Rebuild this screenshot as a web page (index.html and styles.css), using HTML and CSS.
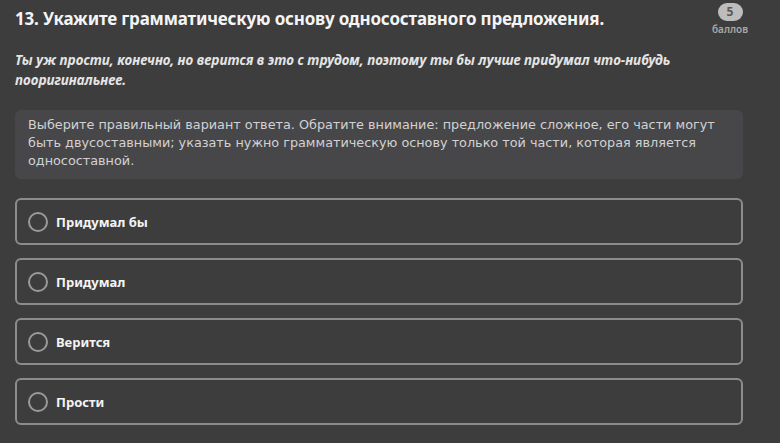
FILE: index.html
```html
<!DOCTYPE html>
<html lang="ru">
<head>
<meta charset="utf-8">
<link rel="stylesheet" href="styles.css">
</head>
<body>
<div class="page">
  <div class="head">
    <h1 class="title">13. Укажите грамматическую основу односоставного предложения.</h1>
    <div class="score">
      <span class="score-num">5</span>
      <span class="score-label">баллов</span>
    </div>
  </div>
  <p class="quote">Ты уж прости, конечно, но верится в это с трудом, поэтому ты бы лучше придумал что-нибудь пооригинальнее.</p>
  <div class="hint">Выберите правильный вариант ответа. Обратите внимание: предложение сложное, его части могут быть двусоставными; указать нужно грамматическую основу только той части, которая является односоставной.</div>
  <div class="options">
    <label class="option"><span class="radio"></span><span class="opt-text">Придумал бы</span></label>
    <label class="option"><span class="radio"></span><span class="opt-text">Придумал</span></label>
    <label class="option"><span class="radio"></span><span class="opt-text">Верится</span></label>
    <label class="option"><span class="radio"></span><span class="opt-text">Прости</span></label>
  </div>
</div>
</body>
</html>
```
FILE: styles.css
```css
html, body {
  margin: 0;
  padding: 0;
  background: #3d3d3d;
}
body {
  font-family: "Noto Sans", "Open Sans", sans-serif;
  color: #f2f2f2;
}
.page {
  width: 728px;
  padding: 0 0 0 15px;
}
.head {
  display: flex;
  justify-content: space-between;
  align-items: flex-start;
  height: 46px;
}
.title {
  margin: 7px 0 0 0;
  font-size: 17px;
  font-weight: 700;
  line-height: 24px;
  letter-spacing: -0.18px;
  color: #f4f4f4;
}
.score {
  display: flex;
  flex-direction: column;
  align-items: center;
  margin: 3px -6px 0 0;
  width: 38px;
}
.score-num {
  display: block;
  width: 25px;
  height: 18px;
  border-radius: 9px;
  background: #bdbdbd;
  color: #5a5a5a;
  font-size: 12px;
  font-weight: 700;
  line-height: 18px;
  text-align: center;
}
.score-label {
  margin-top: 1px;
  font-size: 10px;
  font-weight: 600;
  color: #a9a9a9;
  line-height: 14px;
}
.quote {
  margin: 4px 0 0 0;
  font-size: 13.5px;
  font-weight: 700;
  font-style: italic;
  line-height: 20px;
  color: #e4e4e4;
  width: 690px;
}
.hint {
  margin-top: 20px;
  background: #47474a;
  border-radius: 6px;
  padding: 6px 13px 9px 13px;
  font-family: "DejaVu Sans", "Noto Sans", sans-serif;
  font-size: 12.8px;
  line-height: 18px;
  color: #d2d2d2;
}
.options {
  display: flex;
  flex-direction: column;
  gap: 13px;
  margin-top: 19px;
}
.option {
  display: flex;
  align-items: center;
  height: 43px;
  border: 2px solid #8c8c8c;
  border-radius: 6px;
  padding: 0 11px;
  gap: 8px;
}
.radio {
  width: 16px;
  height: 16px;
  border: 2px solid #9a9a9a;
  border-radius: 50%;
  flex: none;
}
.opt-text {
  font-size: 13px;
  font-weight: 700;
  color: #f4f4f4;
}
```
